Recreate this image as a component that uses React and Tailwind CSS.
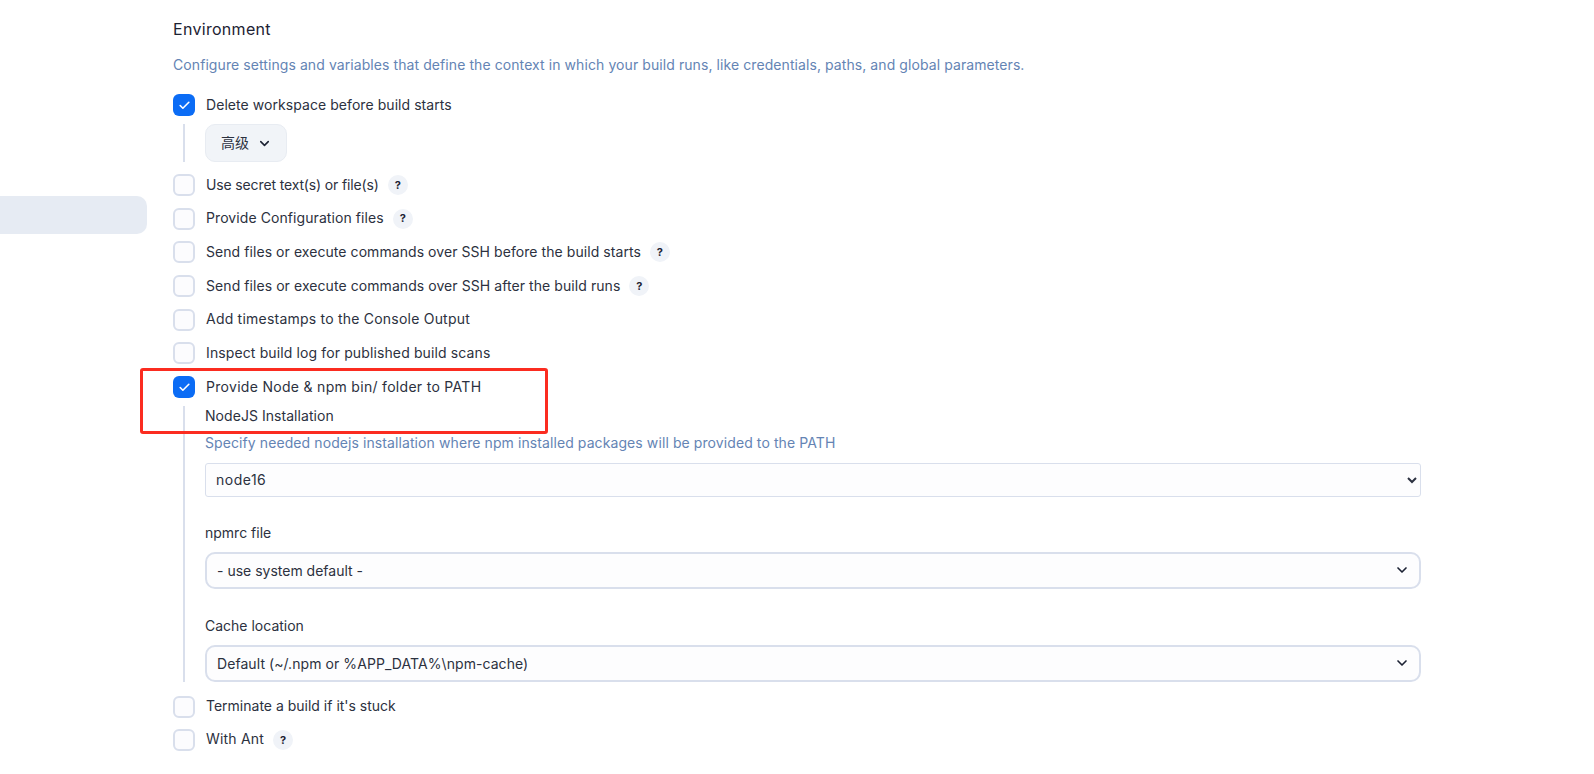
import React from 'react';
import { Check, ChevronDown } from 'lucide-react';

const Box = ({ checked }) =>
  checked ? (
    <span className="w-[22px] h-[22px] shrink-0 rounded-[6px] bg-[#0b6cf5] flex items-center justify-center">
      <Check size={13} strokeWidth={3} className="text-white" />
    </span>
  ) : (
    <span className="w-[22px] h-[22px] shrink-0 rounded-[6px] border-2 border-[#d9dfec] bg-[#fcfcfe]" />
  );

const Help = () => (
  <span className="ml-[9px] w-5 h-5 rounded-full bg-[#f0f3f8] flex items-center justify-center text-[11px] font-bold text-[#1c2233]">
    ?
  </span>
);

const Row = ({ label, help, checked, track = '', className = '' }) => (
  <div className={`flex items-center h-[22px] ${className}`}>
    <Box checked={checked} />
    <span className={`ml-[11px] pb-[2px] text-[14px] text-[#2c3140] whitespace-nowrap ${track}`}>{label}</span>
    {help && <Help />}
  </div>
);

const Fancy = ({ value, track = '', className = '' }) => (
  <div className={`h-[37px] rounded-[10px] border-2 border-[#d9dfec] bg-[#fdfdfe] flex items-center justify-between pl-[10px] pr-[9px] text-[14px] text-[#2c3140] ${className}`}>
    <span className={track}>{value}</span>
    <ChevronDown size={16} strokeWidth={2.5} className="text-[#1c2233]" />
  </div>
);

export default function App() {
  return (
    <div className="relative h-[774px] bg-white flex font-['Inter','Noto_Sans_CJK_SC',sans-serif] overflow-hidden">
      <div className="w-[173px] shrink-0 pt-[196px]">
        <div className="w-[147px] h-[38px] bg-[#e6ebf3] rounded-r-[10px]" />
      </div>

      <div className="w-[1248px] pt-[19px]">
        <h2 className="text-[16px] leading-5 text-[#1c2233] tracking-[0.3px]">Environment</h2>
        <p className="mt-[16px] text-[14px] leading-5 text-[#6484b4] tracking-[0.08px]">
          Configure settings and variables that define the context in which your build runs, like credentials, paths, and global parameters.
        </p>

        <Row checked label="Delete workspace before build starts" track="tracking-[0.06px]" className="mt-[19px]" />
        <div className="mt-2 flex">
          <div className="w-[2px] ml-[10px] bg-[#d9dfec]" />
          <button className="ml-[20px] w-[82px] h-[38px] rounded-[10px] bg-[#f1f4f8] border border-[#e8ecf2] flex items-center justify-center gap-[8px] pl-px pb-[2px] text-[14px] text-[#2c3140]">
            高级 <ChevronDown size={15} strokeWidth={2.5} className="text-[#1c2233] mt-[2px]" />
          </button>
        </div>

        <div className="mt-[12px] flex flex-col gap-[11.7px]">
          <Row label="Use secret text(s) or file(s)" help track="tracking-[-0.14px]" />
          <Row label="Provide Configuration files" help track="tracking-[0.08px]" />
          <Row label="Send files or execute commands over SSH before the build starts" help track="tracking-[0.065px]" />
          <Row label="Send files or execute commands over SSH after the build runs" help track="tracking-[0.07px]" />
          <Row label="Add timestamps to the Console Output" track="tracking-[0.22px]" />
          <Row label="Inspect build log for published build scans" track="tracking-[0.12px]" />
          <Row checked label="Provide Node & npm bin/ folder to PATH" track="tracking-[0.3px]" />
        </div>

        <div className="mt-[7.8px] flex">
          <div className="w-[2px] ml-[10px] bg-[#d9dfec]" />
          <div className="ml-[20px] flex-1 text-[14px] text-[#2c3140]">
            <div className="leading-5 tracking-[0.05px]">NodeJS Installation</div>
            <div className="mt-[7px] leading-5 text-[#6484b4] tracking-[0.09px]">
              Specify needed nodejs installation where npm installed packages will be provided to the PATH
            </div>
            <select
              defaultValue="node16"
              className="mt-[10px] w-full h-[34px] rounded-[3px] border border-[#d9dfec] bg-[#fdfdfe] px-[6px] text-[14px] text-[#2c3140] tracking-[0.5px]"
            >
              <option>node16</option>
            </select>
            <div className="mt-[26px] leading-5">npmrc file</div>
            <Fancy value="- use system default -" className="mt-[9px]" />
            <div className="mt-[27px] leading-5">Cache location</div>
            <Fancy value="Default (~/.npm or %APP_DATA%\npm-cache)" track="tracking-[0.07px]" className="mt-[9px]" />
          </div>
        </div>

        <Row label="Terminate a build if it's stuck" className="mt-[14px]" />
        <Row label="With Ant" help track="tracking-[0.2px]" className="mt-[11px]" />
      </div>

      <div className="absolute left-[140px] top-[368px] w-[408px] h-[66px] border-[3px] border-[#fb2c20] rounded-[3px]" />
    </div>
  );
}
